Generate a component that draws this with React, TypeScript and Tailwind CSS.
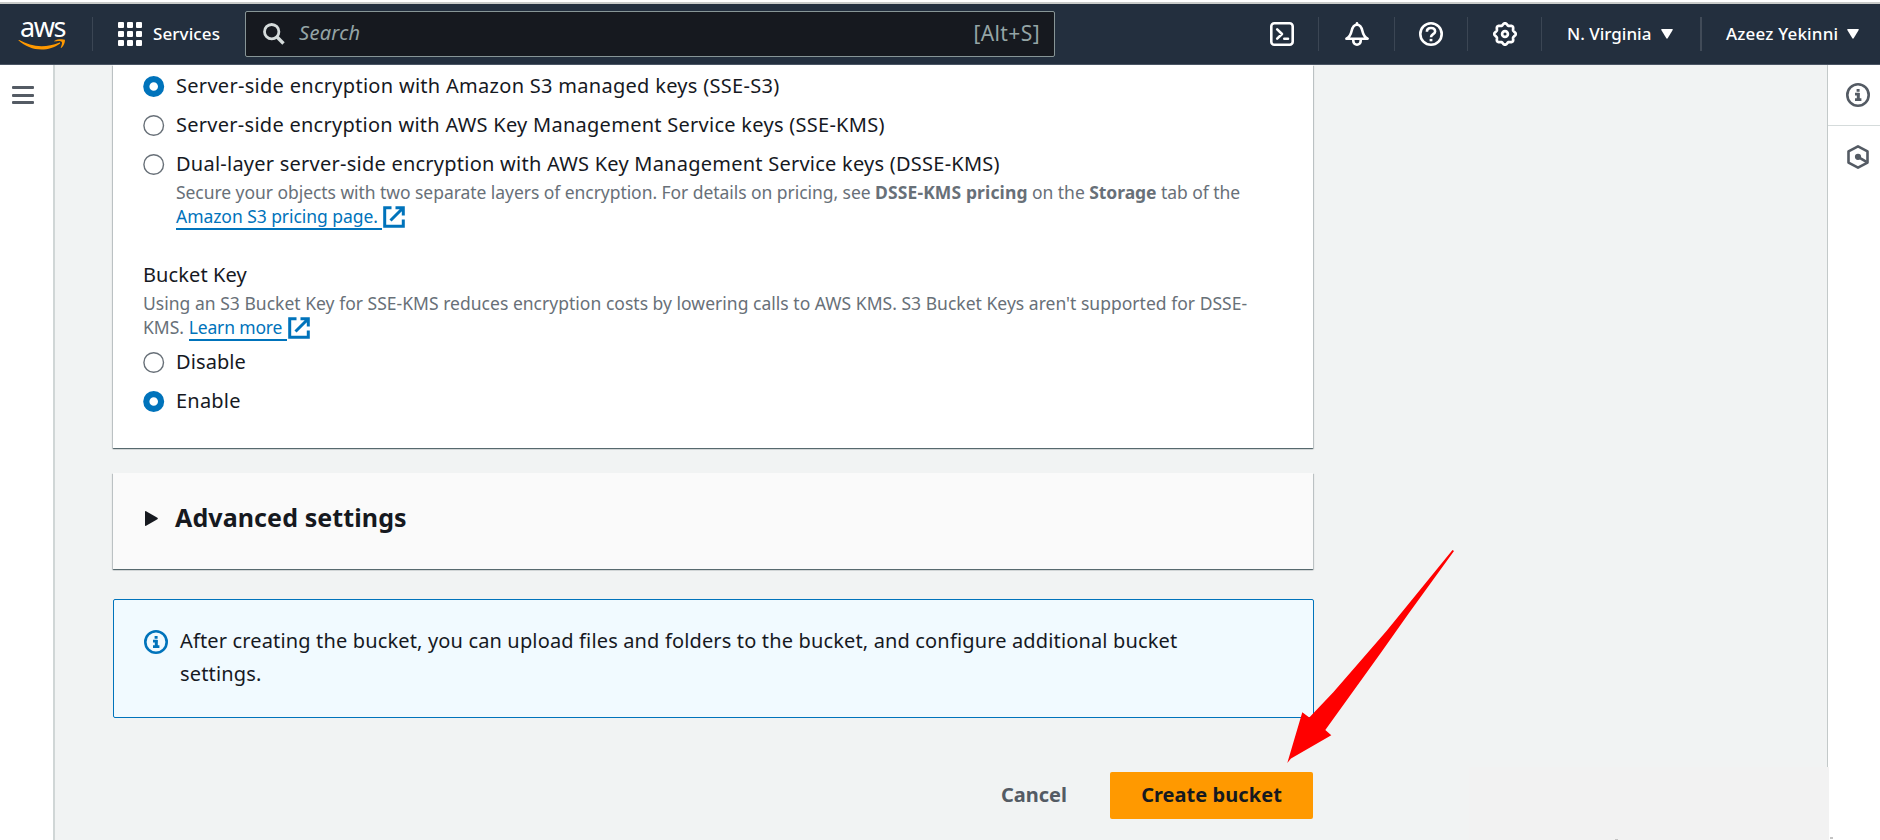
import React from "react";

const gearPath =
  Array.from({ length: 97 }, (_, i) => {
    const a = (i / 96) * Math.PI * 2;
    const r = 9.8 + 0.95 * Math.cos(8 * a);
    return `${i ? "L" : "M"}${(12 + r * Math.sin(a)).toFixed(2)} ${(12 - r * Math.cos(a)).toFixed(2)}`;
  }).join("") + "Z";

function Smile() {
  return (
    <svg className="block h-[12px] w-[50px]" viewBox="0 0 50 12" fill="#ff9900">
      <path d="M0.6 1.6C0.2 1.3 0.6 0.7 1.3 1.1C8 5 15.5 7.2 23.5 7.2C29.5 7.2 35.5 6 41 3.7C41.9 3.3 42.6 4.2 41.8 4.8C36.8 8.4 30 10.6 23.6 10.6C14.8 10.6 6.8 7.2 0.6 1.6Z" />
      <path d="M43.6 2.8C42.6 1.5 38.8 2.2 36.7 2.5C36.2 2.5 36.1 2 36.6 1.7C39.9 -0.5 45.3 0.1 46.7 0.7C47.5 1.5 46.3 6.5 43.5 8.8C43.1 9.2 42.6 9 42.8 8.5C43.4 7 44.6 3.9 43.6 2.8Z" />
    </svg>
  );
}

function ShellIcon() {
  return (
    <svg className="size-6" viewBox="0 0 24 24" fill="none" stroke="#fff" strokeWidth="2.6" strokeLinejoin="round" strokeLinecap="round">
      <rect x="1.3" y="1.3" width="21.4" height="21.4" rx="3" />
      <path d="M7.2 7.4L12 12L7.2 16.6M14.3 16.8H18" />
    </svg>
  );
}

function BellIcon() {
  return (
    <svg className="size-6" viewBox="0 0 24 24" fill="none" stroke="#fff" strokeWidth="2.6" strokeLinejoin="round" strokeLinecap="round">
      <path d="M12 1.3V2.6" />
      <path d="M1.4 16.7C4.5 15.2 5.8 12.5 6.6 9C7.5 5 9 2.8 12 2.8C15 2.8 16.500 5 17.400 9C18.200 12.500 19.500 15.200 22.600 16.700Z" />
      <path d="M8.3 17.5V19A3.7 3.7 0 0 0 15.7 19V17.5" />
    </svg>
  );
}

function HelpIcon() {
  return (
    <svg className="size-6" viewBox="0 0 24 24" fill="none" stroke="#fff" strokeWidth="2.6">
      <circle cx="12" cy="12" r="10.7" />
      <path d="M7.9 9.8C7.9 7.3 9.6 6 12 6C14.4 6 16.1 7.4 16.1 9.4C16.1 12 12 12.3 12 15.2" />
      <path d="M12 16.9V19.3" strokeWidth="2.8" />
    </svg>
  );
}

function GearIcon() {
  return (
    <svg className="size-6" viewBox="0 0 24 24" fill="none" stroke="#fff" strokeWidth="2.7" strokeLinejoin="round">
      <path d={gearPath} />
      <circle cx="12" cy="12" r="2.9" />
    </svg>
  );
}

function InfoIcon({ className }: { className: string }) {
  return (
    <svg className={className} viewBox="0 0 24 24" fill="none" stroke="currentColor" strokeWidth="2.6">
      <circle cx="12" cy="12" r="10.7" />
      <path d="M10.6 7.3H13.6M9 11.2H13.4M9 16.6H15.4" strokeWidth="2.8" />
      <path d="M12.3 10V17" strokeWidth="3" />
    </svg>
  );
}

function HexIcon() {
  return (
    <svg className="size-6 text-[#545b64]" viewBox="0 0 24 24" fill="none" stroke="currentColor" strokeWidth="2.6" strokeLinejoin="round">
      <path d="M12 1.4L21.5 6.4V17.6L12 22.6L2.5 17.6V6.4Z" />
      <circle cx="12" cy="11.8" r="3.1" fill="currentColor" stroke="none" />
      <path d="M12 11.8L20.5 16.8" />
    </svg>
  );
}

function ExternalIcon() {
  return (
    <svg className="ml-px inline-block size-[22px] align-[-5px] text-[#0073bb]" viewBox="0 0 22 22" fill="none" stroke="currentColor" strokeWidth="3">
      <path d="M8.5 1.7H1.7V20.3H20.3V13.5" />
      <path d="M12.5 1.7H20.3V9.5M20 2L7.5 14.5" />
    </svg>
  );
}

function Caret() {
  return (
    <svg className="h-[10px] w-3" viewBox="0 0 12 10" fill="#fff">
      <path d="M0.8 0H11.2Q12.2 0 11.7 0.9L6.7 9.3Q6 10.2 5.3 9.3L0.3 0.9Q-0.2 0 0.8 0Z" />
    </svg>
  );
}

function Radio({ checked, label, tracking }: { checked?: boolean; label: string; tracking: string }) {
  return (
    <label className="flex h-7 items-center gap-[11px]">
      <svg className="-ml-px size-[22px]" viewBox="0 0 22 22">
        {checked ? (
          <circle cx="10.7" cy="11.5" r="7.4" fill="#fff" stroke="#0073bb" strokeWidth="6.2" />
        ) : (
          <circle cx="10.7" cy="11.5" r="9.8" fill="#fff" stroke="#687078" strokeWidth="1.4" />
        )}
      </svg>
      <span className={tracking}>{label}</span>
    </label>
  );
}

function Header() {
  return (
    <header className="flex h-[61px] shrink-0 items-center border-b border-[#4a5564] bg-[#232f3e] text-[17px] font-medium text-white">
      <div className="flex h-[34px] w-[93px] items-center border-r border-[#3b4654] pl-[18px]">
        <div className="flex flex-col items-center">
          <span className="mb-px h-[20px] text-[27px] leading-[18px] font-normal tracking-[-1.4px] [text-indent:-1px]">aws</span>
          <Smile />
        </div>
      </div>
      <div className="flex w-[152px] items-center pl-[25px]">
        <div className="grid grid-cols-3 gap-[3px]">
          {Array.from({ length: 9 }, (_, i) => (
            <span key={i} className="size-[6px] rounded-[1px] bg-white" />
          ))}
        </div>
        <span className="ml-[11px] leading-6 tracking-[0.1px]">Services</span>
      </div>
      <div className="flex h-[46px] w-[810px] items-center rounded-[2px] border border-[#879596] bg-[#16191f] pr-[14px] pl-[17px] font-normal text-[#95a5a6]">
        <svg className="size-[22px]" viewBox="0 0 22 22" fill="none" stroke="#d5dbdb" strokeWidth="2.8">
          <circle cx="8.7" cy="8.7" r="7.2" />
          <path d="M13.8 13.8L20.5 20.5" strokeWidth="3.4" />
        </svg>
        <span className="ml-[14px] flex-1 -translate-y-px text-[20px] leading-7 tracking-[0.3px] italic">Search</span>
        <span className="-translate-y-px text-[21px] leading-7 tracking-[0.4px]">[Alt+S]</span>
      </div>
      <div className="ml-auto flex items-center">
        <div className="flex h-[34px] w-[73px] items-center justify-center border-r border-[#3b4654]"><ShellIcon /></div>
        <div className="flex h-[34px] w-[76px] items-center justify-center border-r border-[#3b4654]"><BellIcon /></div>
        <div className="flex h-[34px] w-[73px] items-center justify-center border-r border-[#3b4654]"><HelpIcon /></div>
        <div className="flex h-[34px] w-[74px] items-center justify-center border-r border-[#3b4654]"><GearIcon /></div>
        <div className="flex h-[34px] w-[160px] items-center gap-[10px] border-r-2 border-[#414b58] pl-[25px]">
          <span>N. Virginia</span>
          <Caret />
        </div>
        <div className="flex h-[34px] w-[178px] items-center gap-[9px] pl-[24px] tracking-[0.18px]">
          <span>Azeez Yekinni</span>
          <Caret />
        </div>
      </div>
    </header>
  );
}

const link = "border-b-2 border-[#0073bb] text-[#0073bb]";
const cardShadow = "shadow-[0_1px_1px_0_rgba(0,28,36,0.5),1px_1px_1px_0_rgba(0,28,36,0.15),-1px_1px_1px_0_rgba(0,28,36,0.15)]";

export default function App() {
  return (
    <div className="relative flex h-[840px] w-[1880px] flex-col overflow-hidden bg-white font-['Noto_Sans',sans-serif] text-[20px] leading-7 text-[#16191f]">
      <div className="h-1 shrink-0 border-b-2 border-[#c9cbc9] bg-white" />
      <Header />
      <div className="flex min-h-0 flex-1">
        <nav className="w-[55px] shrink-0 border-r-2 border-[#d0d6d6] bg-white pt-[21px] pl-[12px]">
          <div className="flex w-[22px] flex-col gap-[4.5px]">
            <span className="h-[3px] rounded-[1px] bg-[#545b64]" />
            <span className="h-[3px] rounded-[1px] bg-[#545b64]" />
            <span className="h-[3px] rounded-[1px] bg-[#545b64]" />
          </div>
        </nav>

        <main className="flex-1 bg-[#f1f3f3] pl-[58px]">
          <div className="flex w-[1200px] flex-col">
            <section className={`h-[383px] bg-white px-[31px] pt-[7px] ${cardShadow}`}>
              <div className="flex flex-col gap-[11px]">
                <Radio checked tracking="tracking-[0.29px]" label="Server-side encryption with Amazon S3 managed keys (SSE-S3)" />
                <Radio tracking="tracking-[0.27px]" label="Server-side encryption with AWS Key Management Service keys (SSE-KMS)" />
                <Radio tracking="tracking-[0.24px]" label="Dual-layer server-side encryption with AWS Key Management Service keys (DSSE-KMS)" />
              </div>
              <p className="mt-[2px] pl-8 text-[17.5px] leading-6 tracking-[-0.055px] whitespace-nowrap text-[#687078]">
                Secure your objects with two separate layers of encryption. For details on pricing, see{" "}
                <b className="tracking-[0.12px]">DSSE-KMS pricing</b> on the <b>Storage</b> tab of the
                <br />
                <a className={link}>Amazon S3 pricing page.&nbsp;</a>
                <ExternalIcon />
              </p>
              <h4 className="-ml-px mt-[33px] font-normal tracking-[0.1px]">Bucket Key</h4>
              <p className="-ml-px mt-[2px] text-[17.5px] leading-6 tracking-[0.02px] whitespace-nowrap text-[#687078]">
                Using an S3 Bucket Key for SSE-KMS reduces encryption costs by lowering calls to AWS KMS. S3 Bucket Keys aren't supported for DSSE-
                <br />
                KMS. <a className={`${link} tracking-[-0.15px]`}>Learn more&nbsp;</a>
                <ExternalIcon />
              </p>
              <div className="mt-[9px] flex flex-col gap-[11px]">
                <Radio tracking="tracking-[0.1px]" label="Disable" />
                <Radio checked tracking="tracking-[0.2px]" label="Enable" />
              </div>
            </section>

            <section className={`mt-[25px] flex h-24 bg-[#fafafa] pt-[27px] pl-8 ${cardShadow}`}>
              <svg className="mt-[11px] h-[15px] w-[13px]" viewBox="0 0 13 15" fill="#16191f">
                <path d="M0 1Q0 -0.3 1.1 0.3L12.4 6.7Q13.3 7.5 12.4 8.2L1.1 14.7Q0 15.3 0 14Z" />
              </svg>
              <h2 className="ml-[17px] text-[25px] leading-[34px] font-bold tracking-[0.1px]">Advanced settings</h2>
            </section>

            <section className="mt-[30px] flex h-[119px] w-[1201px] rounded-[2px] border border-[#0073bb] bg-[#f1faff] pt-6 pl-[30px]">
              <InfoIcon className="mt-[6px] size-6 shrink-0 text-[#0073bb]" />
              <p className="ml-3 leading-[33px] tracking-[0.15px] whitespace-nowrap">
                After creating the bucket, you can upload files and folders to the bucket, and configure additional bucket
                <br />
                settings.
              </p>
            </section>

            <div className="mt-[54px] flex h-[47px] items-center justify-end font-bold">
              <button className="mr-[43px] pb-[2px] text-[#545b64]">Cancel</button>
              <button className="h-[47px] w-[203px] rounded-[2px] bg-[#ff9900] pb-[2px] tracking-[0.05px] text-[#16191f]">Create bucket</button>
            </div>
          </div>
        </main>

        <aside className="w-[53px] shrink-0 border-l border-[#c3c9c9] bg-white">
          <div className="flex h-[61px] items-center justify-center border-b border-[#d5dbdb] pl-2">
            <InfoIcon className="size-6 text-[#545b64]" />
          </div>
          <div className="flex h-[61px] items-center justify-center pl-2">
            <HexIcon />
          </div>
        </aside>
      </div>

      <div className="absolute top-[767px] left-[1469px] h-[73px] w-[360px] bg-[#f2f2f2]" />
      <div className="absolute top-[839px] left-[1615px] h-px w-[3px] bg-[#c4c4c4]" />
      <div className="absolute top-[837px] left-[1830px] h-[2px] w-[3px] bg-[#c4c4c4]" />

      <svg className="absolute top-[545px] left-[1280px]" width="180" height="225" viewBox="1280 545 180 225" fill="#ff0000">
        <path d="M1287.3 763L1302.3 712.2L1309.3 717.5L1333.3 692.3L1386.7 630.7L1452.5 550L1454 551L1409 613L1380 654L1325.3 730L1331.3 735.3L1291 758.5Z" />
      </svg>
    </div>
  );
}
